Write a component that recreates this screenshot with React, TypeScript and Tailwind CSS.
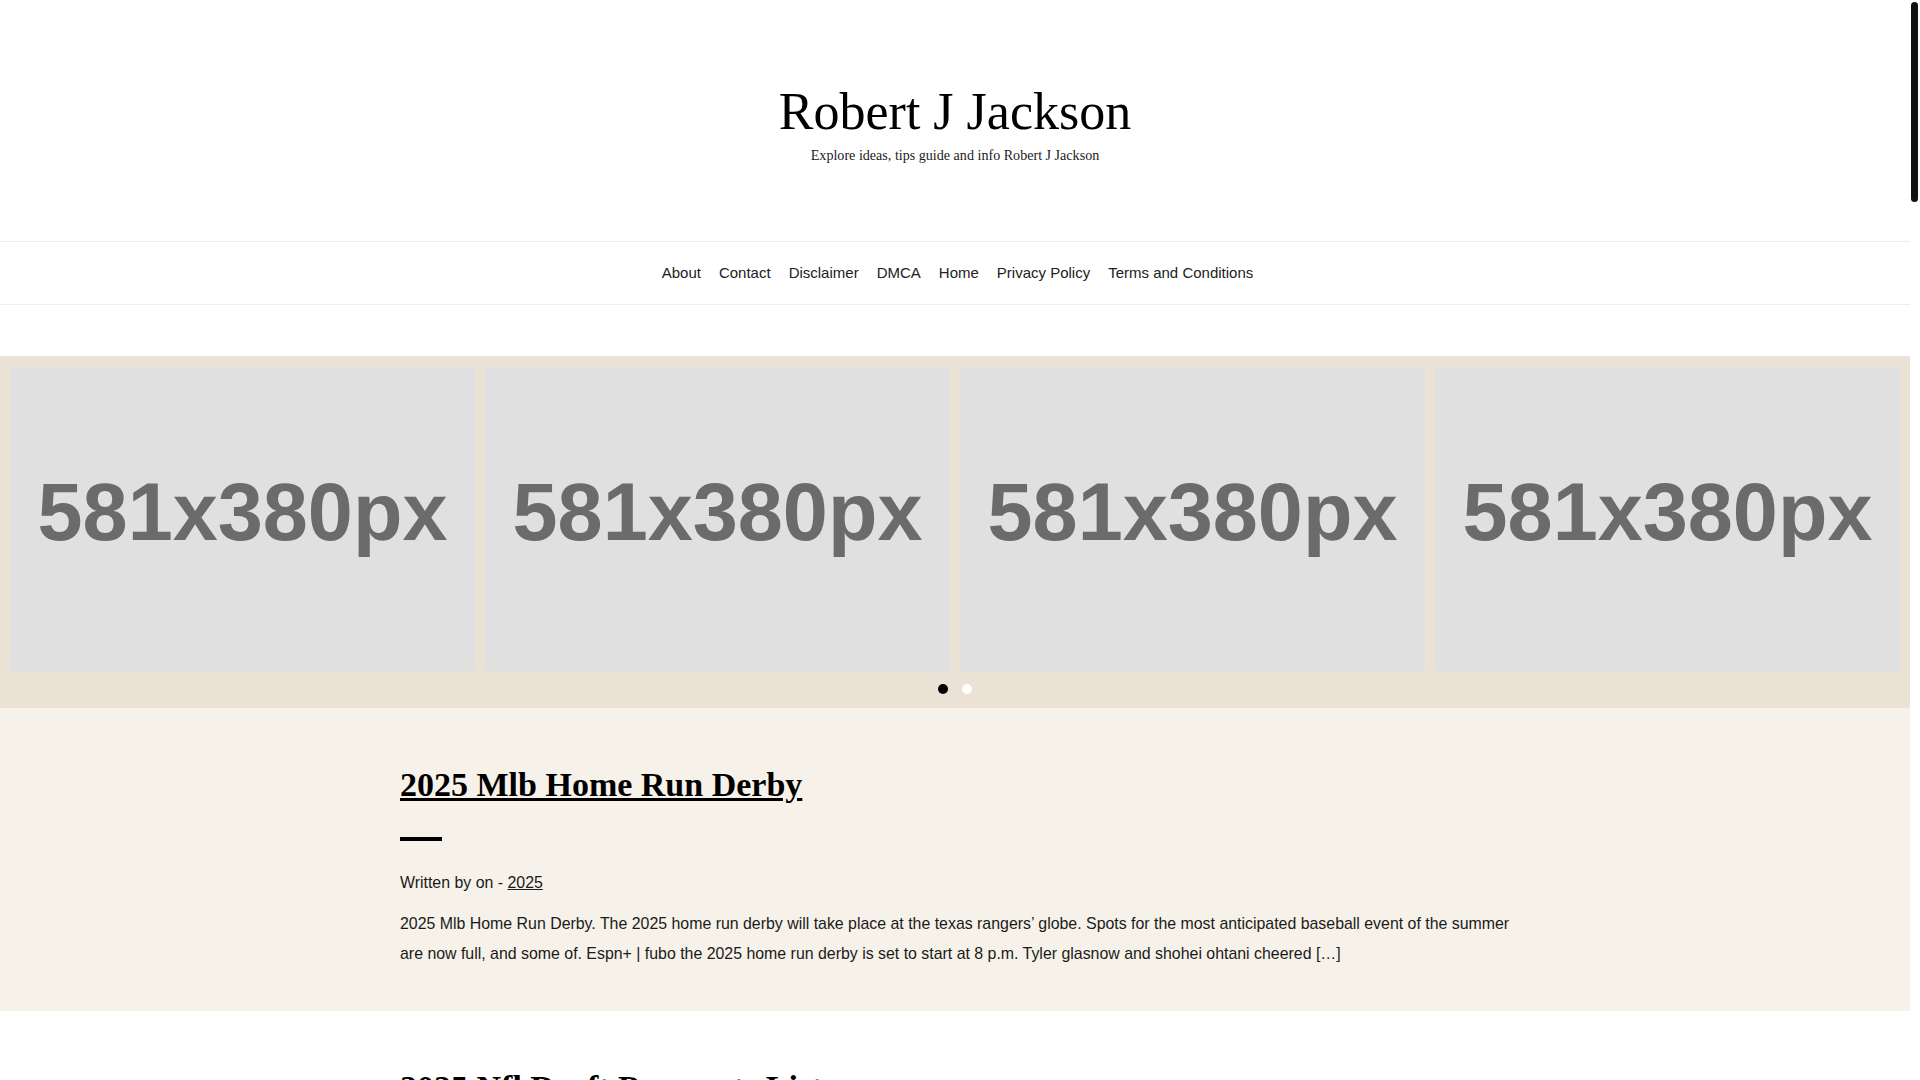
const navLinks = ["About", "Contact", "Disclaimer", "DMCA", "Home", "Privacy Policy", "Terms and Conditions"];

type Post = {
  title: string;
  category: string;
  excerpt: string;
};

const posts: Post[] = [
  {
    title: "2025 Mlb Home Run Derby",
    category: "2025",
    excerpt:
      "2025 Mlb Home Run Derby. The 2025 home run derby will take place at the texas rangers’ globe. Spots for the most anticipated baseball event of the summer are now full, and some of. Espn+ | fubo the 2025 home run derby is set to start at 8 p.m. Tyler glasnow and shohei ohtani cheered […]",
  },
  {
    title: "2025 Nfl Draft Prospects List",
    category: "2025",
    excerpt:
      "2025 Nfl Draft Prospects List. The 2025 nfl draft class is already taking shape, with several quarterbacks and edge rushers drawing early attention from scouts. Here is a look at the top names to watch as the college season gets underway and the big board starts to […]",
  },
  {
    title: "2025 Nba Draft Lottery Odds",
    category: "2025",
    excerpt:
      "2025 Nba Draft Lottery Odds. The lottery odds for the 2025 nba draft are set, and the teams at the bottom of the standings hold the best chances at the first pick. See how each franchise stacks up before the ping pong balls are drawn in […]",
  },
  {
    title: "2025 Calendar Printable Free",
    category: "2025",
    excerpt:
      "2025 Calendar Printable Free. Download a free printable 2025 calendar with holidays, monthly and yearly layouts. Each template is easy to print at home and works well for planning school, work and family events throughout the […]",
  },
  {
    title: "2025 Toyota Camry Review",
    category: "2025",
    excerpt:
      "2025 Toyota Camry Review. The new camry arrives as a hybrid only sedan with a refreshed design and a more upscale cabin. We take a closer look at fuel economy, pricing and the features that make it one of the best family cars of the […]",
  },
  {
    title: "2025 Super Bowl Location",
    category: "2025",
    excerpt:
      "2025 Super Bowl Location. The 2025 super bowl will be played at the caesars superdome in new orleans. Find out everything you need to know about the date, tickets, halftime show and the teams favored to make it to the big […]",
  },
  {
    title: "2025 Holiday Calendar Usa",
    category: "2025",
    excerpt:
      "2025 Holiday Calendar Usa. A complete list of federal holidays in the united states for 2025, including observed dates when a holiday falls on a weekend. Plan your vacations and long weekends ahead with this handy guide to the […]",
  },
  {
    title: "2025 Honda Accord Hybrid",
    category: "2025",
    excerpt:
      "2025 Honda Accord Hybrid. The accord hybrid continues to impress with a smooth ride, roomy interior and strong fuel economy. Here are the trims, prices and the tech upgrades that arrive with the 2025 model […]",
  },
  {
    title: "2025 World Series Schedule",
    category: "2025",
    excerpt:
      "2025 World Series Schedule. The fall classic is coming into focus as the postseason bracket fills out. Check the full world series schedule, start times and tv channels so you never miss a pitch of the […]",
  },
  {
    title: "2025 Tax Brackets Married Filing Jointly",
    category: "2025",
    excerpt:
      "2025 Tax Brackets Married Filing Jointly. The irs has released the new income thresholds for 2025, adjusted for inflation. See where your household income falls and how the standard deduction changes for couples filing […]",
  },
  {
    title: "2025 Kia Telluride Redesign",
    category: "2025",
    excerpt:
      "2025 Kia Telluride Redesign. The popular three row suv gets a few updates for the new model year, with more standard safety tech and new color options. Here is what we know about the next generation […]",
  },
  {
    title: "2025 Masters Tournament Dates",
    category: "2025",
    excerpt:
      "2025 Masters Tournament Dates. Augusta national will once again host the first major of the golf season. Find out the dates, the field and the favorites heading into the 2025 masters […]",
  },
  {
    title: "2025 Chinese New Year Animal",
    category: "2025",
    excerpt:
      "2025 Chinese New Year Animal. The lunar new year in 2025 welcomes the year of the snake. Learn about the traditions, the lucky colors and what the zodiac sign means for the months […]",
  },
  {
    title: "2025 Ford Bronco Sport",
    category: "2025",
    excerpt:
      "2025 Ford Bronco Sport. The compact off roader keeps its rugged looks and capable badlands trim. We review pricing, engine options and the changes that come with the 2025 […]",
  },
  {
    title: "2025 Stanley Cup Playoffs",
    category: "2025",
    excerpt:
      "2025 Stanley Cup Playoffs. The race for the cup is heating up. Follow the bracket, series results and the full schedule for the 2025 stanley cup playoffs right here […]",
  },
];

function Slide() {
  return (
    <div className="flex h-[304px] w-[465px] shrink-0 items-center justify-center bg-[#e0e0e0]">
      <span className="mb-[14px] font-['Liberation_Sans',Arial,sans-serif] text-[81px] font-bold leading-none text-[#6b6b6b]">
        581x380px
      </span>
    </div>
  );
}

function PostItem({ post, alt }: { post: Post; alt: boolean }) {
  return (
    <article className={alt ? "bg-white" : "bg-[#f6f2e9]"}>
      <div className="mx-auto w-[1110px] pb-[42px] pt-[57px]">
        <h2 className="font-['Liberation_Serif','Times_New_Roman',serif] text-[34px] font-bold leading-[1.2] text-black">
          <a href="#" className="underline">
            {post.title}
          </a>
        </h2>
        <div className="mt-[31px] h-[4px] w-[42px] bg-black" />
        <p className="mt-[30px] text-[15.9px] leading-[24px] text-[#1a1a1a]">
          Written by on -{" "}
          <a href="#" className="underline">
            {post.category}
          </a>
        </p>
        <p className="-mr-[8px] mt-[14px] text-[15.9px] leading-[30px] text-[#1a1a1a]">{post.excerpt}</p>
      </div>
    </article>
  );
}

export default function App() {
  return (
    <div className="bg-white pr-[10px] font-['Liberation_Sans',Arial,sans-serif]">
      <header className="pb-[75px] pt-[86px] text-center font-['Liberation_Serif','Times_New_Roman',serif] text-black">
        <h1 className="text-[52px] leading-none">Robert J Jackson</h1>
        <p className="mt-[7px] text-[14.1px] leading-[21px] text-[#222]">
          Explore ideas, tips guide and info Robert J Jackson
        </p>
      </header>

      <nav className="border-y border-[#eeeeee]">
        <ul className="flex h-[62px] items-center justify-center gap-[18px] pl-[5px] text-[15px] text-[#222]">
          {navLinks.map((link) => (
            <li key={link}>
              <a href="#">{link}</a>
            </li>
          ))}
        </ul>
      </nav>

      <section className="mt-[51px] bg-[#ebe2d5] px-[10px] pb-[14px] pt-[11px]">
        <div className="flex gap-[10px]">
          <Slide />
          <Slide />
          <Slide />
          <Slide />
        </div>
        <div className="mt-[13px] flex justify-center gap-[14px]">
          <span className="h-[10px] w-[10px] rounded-full bg-black" />
          <span className="h-[10px] w-[10px] rounded-full bg-white" />
        </div>
      </section>

      <main>
        {posts.map((post, i) => (
          <PostItem key={post.title} post={post} alt={i % 2 === 1} />
        ))}
      </main>

      <footer className="border-t border-[#eeeeee] py-[30px] text-center text-[14px] text-[#222]">
        Copyright © 2025 Robert J Jackson
      </footer>

      {/* scrollbar thumb */}
      <div className="fixed right-[2px] top-[2px] h-[200px] w-[7px] rounded-full bg-[#111]" />
    </div>
  );
}
